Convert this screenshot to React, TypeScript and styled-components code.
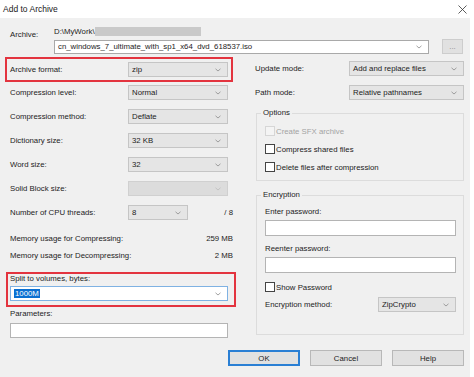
import React from "react";
import styled, { createGlobalStyle } from "styled-components";

const Global = createGlobalStyle`
  * { box-sizing: border-box; }
  body {
    margin: 0;
    background: #ffffff;
    font-family: "Liberation Sans", Arial, sans-serif;
    color: #1c1c1c;
  }
`;

const Window = styled.div`
  width: 470px;
  height: 371px;
  display: flex;
  flex-direction: column;
  background: #f0f0f0;
`;

const TitleBar = styled.div`
  height: 18px;
  width: 474px;
  background: #ffffff;
  display: flex;
  align-items: center;
  justify-content: space-between;
  padding: 0 7px 0 3px;
  font-size: 8.5px;
  color: #1a1a1a;
`;

const Body = styled.div`
  flex: 1;
  padding: 6px 6px 0 5px;
  display: flex;
  flex-direction: column;
  font-size: 7.8px;
`;

const ArchiveRow = styled.div`
  display: flex;
  padding-left: 5px;
`;

const ArchiveLabel = styled.div`
  width: 44px;
  padding-top: 6px;
  line-height: 10px;
`;

const PathCol = styled.div`
  display: flex;
  flex-direction: column;
`;

const PathLine = styled.div`
  height: 15px;
  display: flex;
  align-items: center;
`;

const Redacted = styled.span`
  display: inline-block;
  width: 106px;
  height: 9px;
  background: #c9c9c9;
`;

const FileRow = styled.div`
  display: flex;
  align-items: center;
  height: 15px;
`;

const Columns = styled.div`
  margin-top: 3px;
  display: grid;
  grid-template-columns: 231px 209px;
  column-gap: 19px;
  align-items: start;
`;

const Column = styled.div`
  display: flex;
  flex-direction: column;
`;

const RedBox = styled.div<{ $wide?: boolean }>`
  border: 2px solid #e3343f;
  width: ${(p) => (p.$wide ? 230 : 228)}px;
  margin-left: ${(p) => (p.$wide ? 1 : 0)}px;
  margin-top: ${(p) => (p.$wide ? 10 : 0)}px;
  padding: ${(p) => (p.$wide ? "0 6px 4px 2px" : "3px")};
`;

const Rows = styled.div<{ $top: number }>`
  margin-top: ${(p) => p.$top}px;
  display: flex;
  flex-direction: column;
  gap: 9px;
`;

const Row = styled.div<{ $indent?: number; $width?: number; $top?: number }>`
  display: flex;
  align-items: center;
  height: 15px;
  margin-top: ${(p) => p.$top ?? 0}px;
  padding-left: ${(p) => p.$indent ?? 0}px;
  width: ${(p) => (p.$width ? `${p.$width}px` : "auto")};
`;

const Label = styled.span<{ $w?: number }>`
  width: ${(p) => (p.$w ? `${p.$w}px` : "auto")};
  flex-shrink: 0;
  white-space: nowrap;
`;

const Trail = styled.span`
  margin-left: auto;
`;

const InfoRow = styled.div<{ $top: number }>`
  display: flex;
  justify-content: space-between;
  height: 12px;
  line-height: 12px;
  width: 223px;
  margin-left: 5px;
  margin-top: ${(p) => p.$top}px;
`;

type Kind = "drop" | "edit" | "focus" | "off";

const Combo = styled.div<{ $w: number; $kind?: Kind; $h?: number }>`
  width: ${(p) => p.$w}px;
  height: ${(p) => p.$h ?? 15}px;
  flex-shrink: 0;
  display: flex;
  align-items: center;
  justify-content: space-between;
  padding: 0 6px 0 3px;
  background: ${(p) =>
    p.$kind === "edit" || p.$kind === "focus"
      ? "#ffffff"
      : p.$kind === "off"
      ? "#dcdcdc"
      : "#e5e5e5"};
  border: 1px solid
    ${(p) =>
      p.$kind === "focus"
        ? "#7fb2e3"
        : p.$kind === "edit"
        ? "#a9a9a9"
        : p.$kind === "off"
        ? "#d0d0d0"
        : "#c5c5c5"};
  color: #1c1c1c;
  white-space: nowrap;
  overflow: hidden;
`;

const Selected = styled.span`
  background: #0a6fd1;
  color: #ffffff;
  padding: 0 1px;
  line-height: 10px;
`;

const Field = styled.div<{ $w: number; $h: number; $top: number; $left?: number }>`
  width: ${(p) => p.$w}px;
  height: ${(p) => p.$h}px;
  margin-top: ${(p) => p.$top}px;
  margin-left: ${(p) => p.$left ?? 0}px;
  background: #ffffff;
  border: 1px solid #b4b4b4;
`;

const SmallButton = styled.div`
  width: 21px;
  height: 15px;
  margin-left: 13px;
  background: #e1e1e1;
  border: 1px solid #cdcdcd;
  display: flex;
  align-items: center;
  justify-content: center;
  color: #8a8a8a;
`;

const TextLine = styled.div<{ $top: number; $left?: number }>`
  margin-top: ${(p) => p.$top}px;
  padding-left: ${(p) => p.$left ?? 0}px;
  height: 10px;
  line-height: 10px;
  white-space: nowrap;
`;

const Group = styled.fieldset<{ $top: number; $bottom: number }>`
  margin: ${(p) => p.$top}px 0 0 1px;
  width: 208px;
  border: 1px solid #dcdcdc;
  padding: 0 8px ${(p) => p.$bottom}px 8px;
  min-width: 0;
`;

const Legend = styled.legend`
  font-size: 7.8px;
  line-height: 10px;
  padding: 0 2px;
  margin-left: -4px;
  color: #1c1c1c;
`;

const CheckRow = styled.div<{ $top: number; $off?: boolean }>`
  display: flex;
  align-items: center;
  height: 10px;
  margin-top: ${(p) => p.$top}px;
  color: ${(p) => (p.$off ? "#a3a3a3" : "#1c1c1c")};
`;

const Box = styled.span<{ $off?: boolean }>`
  width: 10px;
  height: 10px;
  margin-right: 1px;
  background: ${(p) => (p.$off ? "#f4f4f4" : "#ffffff")};
  border: 1px solid ${(p) => (p.$off ? "#d6d6d6" : "#444444")};
`;

const Footer = styled.div`
  margin-top: 12px;
  display: flex;
  justify-content: flex-end;
  gap: 10px;
`;

const Button = styled.div<{ $primary?: boolean }>`
  width: 72px;
  height: 16px;
  display: flex;
  align-items: center;
  justify-content: center;
  background: #e1e1e1;
  border: ${(p) => (p.$primary ? "2px solid #2a7fd4" : "1px solid #b8b8b8")};
  color: #1c1c1c;
`;

function Chevron({ faint }: { faint?: boolean }) {
  return (
    <svg width="6" height="4" viewBox="0 0 6 4">
      <path
        d="M0.5 0.8 L3 3 L5.5 0.8"
        fill="none"
        stroke={faint ? "#bdbdbd" : "#8c8c8c"}
        strokeWidth="0.8"
      />
    </svg>
  );
}

function Drop({
  w,
  value,
  kind = "drop",
}: {
  w: number;
  value?: React.ReactNode;
  kind?: Kind;
}) {
  return (
    <Combo $w={w} $kind={kind}>
      <span>{value}</span>
      <Chevron faint={kind === "off"} />
    </Combo>
  );
}

const leftRows: [string, string, Kind?][] = [
  ["Compression level:", "Normal"],
  ["Compression method:", "Deflate"],
  ["Dictionary size:", "32 KB"],
  ["Word size:", "32"],
  ["Solid Block size:", "", "off"],
];

export default function App() {
  return (
    <>
      <Global />
      <TitleBar>
        <span>Add to Archive</span>
        <svg width="9" height="9" viewBox="0 0 9 9">
          <path d="M0.5 0.5 L8.5 8.5 M8.5 0.5 L0.5 8.5" stroke="#333" strokeWidth="0.8" />
        </svg>
      </TitleBar>
      <Window>
        <Body>
          <ArchiveRow>
            <ArchiveLabel>Archive:</ArchiveLabel>
            <PathCol>
              <PathLine>
                <span>D:\MyWork\</span>
                <Redacted />
              </PathLine>
              <FileRow>
                <Combo $w={375} $h={14} $kind="edit">
                  <span>cn_windows_7_ultimate_with_sp1_x64_dvd_618537.iso</span>
                  <Chevron />
                </Combo>
                <SmallButton>...</SmallButton>
              </FileRow>
            </PathCol>
          </ArchiveRow>

          <Columns>
            <Column>
              <RedBox>
                <Row>
                  <Label $w={118}>Archive format:</Label>
                  <Drop w={100} value="zip" />
                </Row>
              </RedBox>
              <Rows $top={3}>
                {leftRows.map(([label, value, kind]) => (
                  <Row key={label} $indent={5}>
                    <Label $w={118}>{label}</Label>
                    <Drop w={100} value={value} kind={kind} />
                  </Row>
                ))}
                <Row $indent={5} $width={228}>
                  <Label $w={118}>Number of CPU threads:</Label>
                  <Drop w={60} value="8" />
                  <Trail>/ 8</Trail>
                </Row>
              </Rows>
              <InfoRow $top={13}>
                <span>Memory usage for Compressing:</span>
                <span>259 MB</span>
              </InfoRow>
              <InfoRow $top={5}>
                <span>Memory usage for Decompressing:</span>
                <span>2 MB</span>
              </InfoRow>
              <RedBox $wide>
                <TextLine $top={0}>Split to volumes, bytes:</TextLine>
                <Row $top={2}>
                  <Drop w={218} kind="focus" value={<Selected>1000M</Selected>} />
                </Row>
              </RedBox>
              <TextLine $top={2} $left={5}>
                Parameters:
              </TextLine>
              <Field $w={218} $h={15} $top={4} $left={5} />
            </Column>

            <Column>
              <Rows $top={4}>
                <Row>
                  <Label $w={94}>Update mode:</Label>
                  <Drop w={115} value="Add and replace files" />
                </Row>
                <Row>
                  <Label $w={94}>Path mode:</Label>
                  <Drop w={115} value="Relative pathnames" />
                </Row>
              </Rows>
              <Group $top={8} $bottom={8}>
                <Legend>Options</Legend>
                <CheckRow $top={8} $off>
                  <Box $off />
                  Create SFX archive
                </CheckRow>
                <CheckRow $top={8}>
                  <Box />
                  Compress shared files
                </CheckRow>
                <CheckRow $top={8}>
                  <Box />
                  Delete files after compression
                </CheckRow>
              </Group>
              <Group $top={9} $bottom={22}>
                <Legend>Encryption</Legend>
                <TextLine $top={7}>Enter password:</TextLine>
                <Field $w={191} $h={16} $top={3} />
                <TextLine $top={8}>Reenter password:</TextLine>
                <Field $w={191} $h={16} $top={3} />
                <CheckRow $top={9}>
                  <Box />
                  Show Password
                </CheckRow>
                <Row $top={5}>
                  <Label $w={113}>Encryption method:</Label>
                  <Drop w={78} value="ZipCrypto" />
                </Row>
              </Group>
            </Column>
          </Columns>

          <Footer>
            <Button $primary>OK</Button>
            <Button>Cancel</Button>
            <Button>Help</Button>
          </Footer>
        </Body>
      </Window>
    </>
  );
}
